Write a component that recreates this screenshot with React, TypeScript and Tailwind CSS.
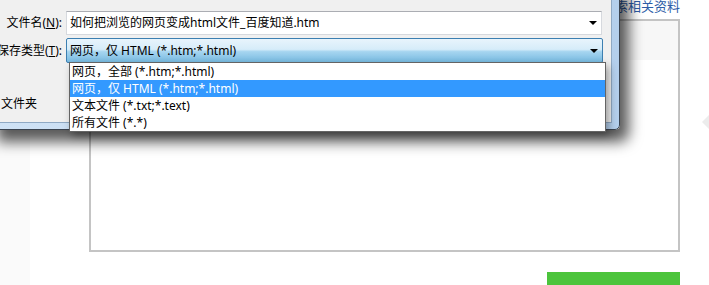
const ui = "font-['Noto_Sans','Noto_Sans_CJK_SC',sans-serif]";

const Arrow = () => (
  <svg width="8" height="4" viewBox="0 0 8 4" className="shrink-0">
    <path d="M0 0H8L4 4Z" fill="#000" />
  </svg>
);

const options = [
  "网页，全部 (*.htm;*.html)",
  "网页，仅 HTML (*.htm;*.html)",
  "文本文件 (*.txt;*.text)",
  "所有文件 (*.*)",
];

export default function App() {
  return (
    <div className={`relative w-[709px] h-[285px] overflow-hidden bg-white flex ${ui}`}>
      {/* left page gutter */}
      <div className="w-[30px] shrink-0 bg-[#fafafa]" />

      {/* page content */}
      <div className="flex-1 flex flex-col">
        <div className="h-[19px] shrink-0 flex justify-end pr-[29px]">
          <span className="text-[13px] leading-[13px] text-[#2d5ca6]">搜索相关资料</span>
        </div>
        <div className="shrink-0 ml-[59px] w-[591px] h-[233px] border-2 border-[#c4c4c4] bg-white">
          <div className="h-[39px] bg-[#f7f7f7]" />
        </div>
        <div className="shrink-0 mt-[20px] ml-[517px] w-[133px] h-[20px] bg-[#4cc43c]" />
      </div>

      {/* pale arrow at right edge */}
      <div className="absolute right-0 top-[115px] w-0 h-0 border-y-[7px] border-y-transparent border-r-[7px] border-r-[#ececec]" />

      {/* save dialog */}
      <div className="absolute left-[-4px] top-[-10px] w-[624px] h-[140px] rounded-br-[5px] border border-[#3b4450] bg-[linear-gradient(to_right,#cfe2f5,#b4cfec)] shadow-[5px_8px_14px_4px_rgba(0,0,0,0.65)] pr-[7px] pb-[6px]">
        <div className="h-full bg-[#f0f0f0] border-r border-b border-[#8fa9c4] relative">
          <div className="absolute left-[4px] top-[20px] flex items-center">
            <span className="w-[65px] pr-[4px] text-right text-[12px] text-black whitespace-nowrap">
              文件名(<span className="underline">N</span>):
            </span>
            <div className="w-[536px] h-[24px] bg-white border border-[#d6d9de] border-t-[#abadb3] flex items-center justify-between pl-[3px] pr-[4px] text-[12px] text-black">
              <span>如何把浏览的网页变成html文件_百度知道.htm</span>
              <Arrow />
            </div>
          </div>

          <div className="absolute left-[-2px] top-[47px] flex items-center">
            <span className="w-[71px] pr-[4px] text-right text-[12px] text-black whitespace-nowrap">
              保存类型(<span className="underline">T</span>):
            </span>
            <div className="w-[537px] h-[25px] rounded-[2px] border border-[#3c7fb1] bg-[linear-gradient(to_bottom,#e8f4fc_0%,#d6ecf9_45%,#a6d5f0_55%,#78bbe1_100%)] flex items-center justify-between pl-[3px] pr-[4px] text-[12px] text-black">
              <span>网页，仅 HTML (*.htm;*.html)</span>
              <Arrow />
            </div>
          </div>

          <div className="absolute left-[4px] top-[104px] text-[12px] leading-[17px] text-black">文件夹</div>
        </div>
      </div>

      {/* open drop-down list */}
      <div className="absolute left-[69px] top-[62px] w-[537px] h-[70px] bg-white border border-[#646464] shadow-[3px_4px_8px_rgba(0,0,0,0.35)] text-[12px] leading-[17px] text-black">
        {options.map((o, i) => (
          <div key={o} className={`h-[17px] pl-[2px] ${i === 1 ? "bg-[#3399ff] text-white" : ""}`}>
            {o}
          </div>
        ))}
      </div>
    </div>
  );
}
